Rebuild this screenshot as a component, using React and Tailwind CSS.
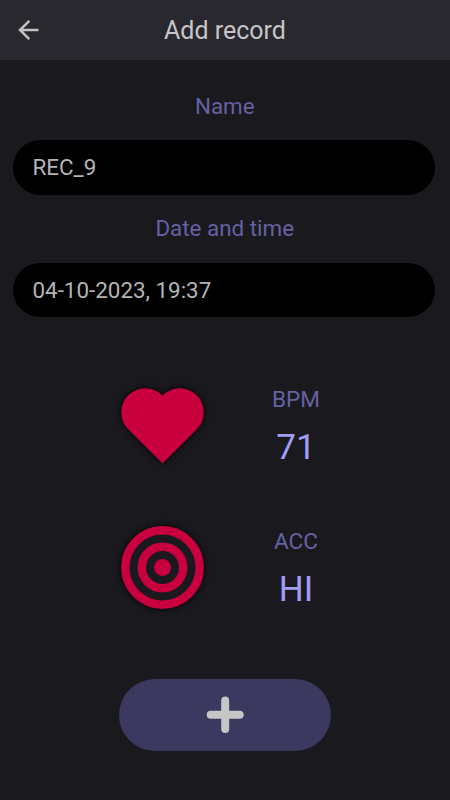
import { useState } from 'react';

const initialRecord = {
    name: 'REC_9',
    date: '04-10-2023, 19:37',
    bpm: '71',
    accuracy: 'HI'
};

const BackIcon = () => (
    <svg className="h-6 w-6" viewBox="0 0 24 24" fill="none" stroke="#c4c0c6" strokeWidth="2.5">
        <path d="M23.5 12H4.5M14.3 2.8L5 12L14.3 21.2" />
    </svg>
);

const HeartIcon = () => (
    <svg
        className="h-24 w-24 drop-shadow-[0_0_3px_#000000]"
        viewBox="-0.5 0 96 96"
        fill="#c8003e"
    >
        <path d="M48 17.6A24 24 0 1 0 13.5 51L46.8 84.3Q48 85.5 49.2 84.3L82.5 51A24 24 0 1 0 48 17.6Z" />
    </svg>
);

const TargetIcon = () => (
    <svg
        className="h-24 w-24 drop-shadow-[0_0_3px_#000000]"
        viewBox="-0.5 0 96 96"
        fill="none"
        stroke="#c8003e"
        strokeWidth="8.5"
    >
        <circle cx="48" cy="47.5" r="41.2" fill="#1a191e" stroke="none" />
        <circle cx="48" cy="47.5" r="37.2" />
        <circle cx="48" cy="47.5" r="20.7" />
        <circle cx="48" cy="47.5" r="8.5" fill="#c8003e" stroke="none" />
    </svg>
);

const PlusIcon = () => (
    <svg className="h-10 w-10" viewBox="0 0 40 40" stroke="#c6c6c6" strokeWidth="8" strokeLinecap="round">
        <path d="M20.2 5.5V34M5.7 19.8H34.7" />
    </svg>
);

const Field = ({ label, value, onChange }) => (
    <label className="flex flex-col items-center">
        <span className="flex h-[68px] items-center pt-px pl-[2px] text-[22.4px] text-[#6561a2]">{label}</span>
        <input
            type="text"
            value={value}
            onChange={(e) => onChange(e.target.value)}
            className="h-[54.5px] w-full rounded-full bg-black px-5 text-[22.4px] text-[#b4b4b4] outline-none"
        />
    </label>
);

const Reading = ({ icon, label, value }) => (
    <div className="flex h-[142px] items-center">
        <div className="ml-[114px]">{icon}</div>
        <div className="ml-[26px] flex w-[120px] flex-col items-center pt-[2px]">
            <span className="text-[22.6px] leading-7 text-[#6561a2]">{label}</span>
            <span className="mt-[14px] text-[35px] leading-10 text-[#a29cf4]">{value}</span>
        </div>
    </div>
);

export default function App() {
    const [record, setRecord] = useState(initialRecord);

    const update = (key) => (value) => setRecord({ ...record, [key]: value });

    return (
        <div className="flex h-[800px] w-[450px] flex-col overflow-hidden bg-[#1a191e] font-['Roboto',sans-serif]">
            <header className="grid h-[60px] shrink-0 grid-cols-[60px_1fr_60px] items-center bg-[#29282e]">
                <button className="ml-[15px] w-6" aria-label="Back">
                    <BackIcon />
                </button>
                <h1 className="pt-[2px] text-center text-[25px] text-[#c6c5c8]">Add record</h1>
            </header>

            <div className="flex flex-col pt-3 pr-[15px] pl-[12.5px]">
                <Field label="Name" value={record.name} onChange={update('name')} />
                <Field label="Date and time" value={record.date} onChange={update('date')} />
            </div>

            {/* Measured values */}
            <div className="mt-[38px] flex flex-col">
                <Reading icon={<HeartIcon />} label="BPM" value={record.bpm} />
                <Reading icon={<TargetIcon />} label="ACC" value={record.accuracy} />
            </div>

            <button
                className="mt-10 flex h-[71.5px] w-[211.5px] items-center justify-center self-center rounded-full bg-[#3c3960]"
                aria-label="Save record"
            >
                <PlusIcon />
            </button>
        </div>
    );
}
